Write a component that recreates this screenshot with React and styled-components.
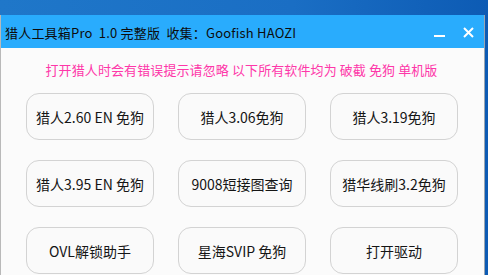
import styled, {createGlobalStyle} from "styled-components";

const GlobalStyle = createGlobalStyle`
  html, body {
    margin: 0;
    padding: 0;
    height: 100%;
    overflow: hidden;
  }

  body {
    background: linear-gradient(90deg, #1f77c9 0%, #1a6ec4 60%, #0d5bb4 100%);
    font-family: "Noto Sans CJK SC", "Noto Sans", sans-serif;
  }
`;

const StyledWindow = styled.div`
  margin-top: 15px;
  width: 485px;
  height: 260px;
  border-left: 1px solid #b9b9b9;
  border-right: 1px solid #9aa6b3;
  box-sizing: border-box;
  background-color: #fbfbfb;
  display: flex;
  flex-direction: column;
`;

const StyledTitleBar = styled.div`
  height: 33px;
  flex-shrink: 0;
  background-color: #29acfd;
  display: flex;
  align-items: center;
  justify-content: space-between;
  padding: 2px 0 0 4px;
  box-sizing: border-box;
`;

const StyledTitle = styled.span`
  font-size: 13px;
  color: #0c0c0c;
  white-space: nowrap;
  letter-spacing: 0.2px;
`;

const StyledControls = styled.div`
  display: flex;
  align-items: center;
  gap: 18px;
  padding-right: 10px;
  height: 100%;
`;

const StyledControlIcon = styled.svg`
  display: block;
  width: 11px;
  height: 11px;
`;

const StyledContent = styled.div`
  display: flex;
  flex-direction: column;
  align-items: center;
  padding-top: 13px;
`;

const StyledNotice = styled.p`
  margin: 0;
  font-size: 13px;
  line-height: 18px;
  color: #fe37a9;
  white-space: nowrap;
  letter-spacing: 0.1px;
  transform: translateX(-1px);
`;

const StyledButtonGrid = styled.div`
  display: grid;
  grid-template-columns: repeat(3, 128px);
  grid-auto-rows: 47px;
  column-gap: 24px;
  row-gap: 20px;
  margin-top: 14px;
  align-self: flex-start;
  padding-left: 25px;
`;

const StyledToolButton = styled.button`
  border: 1px solid #d3d3d3;
  border-radius: 13px;
  background-color: #fafafa;
  font-family: "Noto Sans CJK SC", "Noto Sans", sans-serif;
  font-size: 14px;
  color: #151515;
  padding: 0;
  white-space: nowrap;
  cursor: pointer;
`;

const tools = [
    "猎人2.60 EN 免狗",
    "猎人3.06免狗",
    "猎人3.19免狗",
    "猎人3.95 EN 免狗",
    "9008短接图查询",
    "猎华线刷3.2免狗",
    "OVL解锁助手",
    "星海SVIP 免狗",
    "打开驱动",
];

function App() {
    return (
        <>
            <GlobalStyle/>
            <StyledWindow>
                <StyledTitleBar>
                    <StyledTitle>猎人工具箱Pro&nbsp; 1.0 完整版&nbsp; 收集：Goofish HAOZI</StyledTitle>
                    <StyledControls>
                        <StyledControlIcon viewBox="0 0 11 11">
                            <rect x="0" y="8" width="11" height="2" fill="#fff"/>
                        </StyledControlIcon>
                        <StyledControlIcon viewBox="0 0 11 11">
                            <path d="M1 1 L10 10 M10 1 L1 10" stroke="#fff" strokeWidth="2"/>
                        </StyledControlIcon>
                    </StyledControls>
                </StyledTitleBar>
                <StyledContent>
                    <StyledNotice>打开猎人时会有错误提示请忽略 以下所有软件均为 破截 免狗 单机版</StyledNotice>
                    <StyledButtonGrid>
                        {tools.map(name => (
                            <StyledToolButton key={name}>{name}</StyledToolButton>
                        ))}
                    </StyledButtonGrid>
                </StyledContent>
            </StyledWindow>
        </>
    );
}

export default App;
